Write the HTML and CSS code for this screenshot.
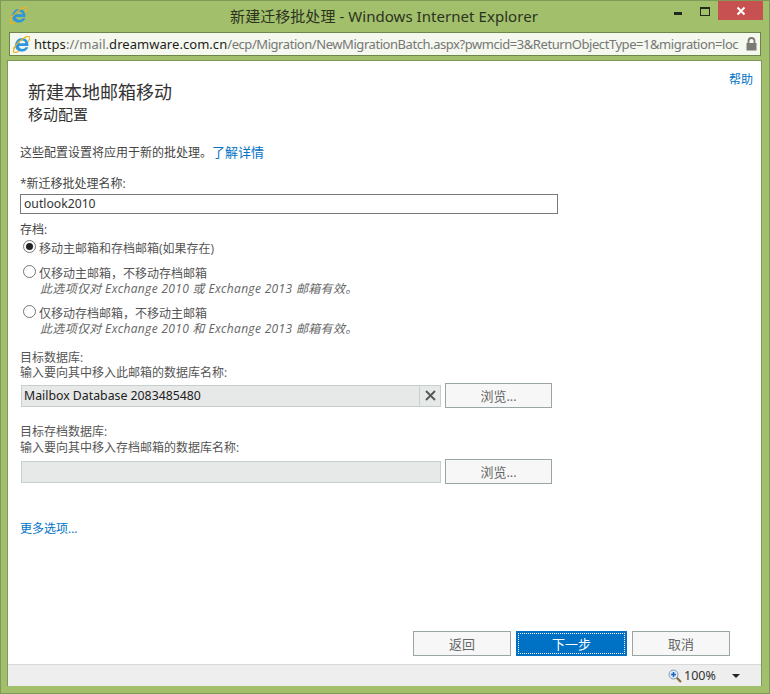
FILE: index.html
```html
<!DOCTYPE html>
<html lang="zh-CN">
<head>
<meta charset="utf-8">
<title>新建迁移批处理</title>
<link rel="stylesheet" href="styles.css">
</head>
<body>
<svg class="defs" width="0" height="0">
  <defs>
    <symbol id="ie" viewBox="1 1 18 18">
      <path d="M3.200 11.500C3 6.500 6.500 3 10.600 3c3.900 0 6.500 2.800 6.700 6.900v1.600H7.400c.2 2 1.600 3.200 3.600 3.200 1.500 0 2.600-.6 3.200-1.700h3c-1 2.900-3.300 4.400-6.300 4.400-4.400 0-7.500-2.300-7.700-5.900zM7.500 8.800h6.600c-.2-1.900-1.500-3-3.300-3-1.800 0-3 1.200-3.300 3z" fill="#2f96dc"/>
      <path d="M2 16.500C.4 14.500 5 8.500 9.500 5.200c4-3 8-4.400 9-3.200.8 1-.1 3.200-1.600 5" fill="none" stroke="#f2b21c" stroke-width="1.300"/>
      <path d="M2.500 12.500C1 15.500 1 18 2.500 18.500c1.200.4 3-.3 4.500-1.500" fill="none" stroke="#f2b21c" stroke-width="1.300"/>
    </symbol>
  </defs>
</svg>
<div class="window">
  <header class="titlebar">
    <svg class="ie-title"><use href="#ie"/></svg>
    <div class="title">新建迁移批处理 - Windows Internet Explorer</div>
    <div class="controls">
      <span class="min"></span>
      <span class="max"></span>
      <span class="close">
        <svg width="10" height="10" viewBox="0 0 10 10"><path d="M1.500 1.500l7 7M8.500 1.500l-7 7" stroke="#fff" stroke-width="2"/></svg>
      </span>
    </div>
  </header>
  <div class="addressbar">
    <svg class="ie-addr"><use href="#ie"/></svg>
    <div class="url"><span class="host">https</span>://mail.<span class="host">dreamware.com.cn</span><span class="path">/ecp/Migration/NewMigrationBatch.aspx?pwmcid=3&amp;ReturnObjectType=1&amp;migration=loc</span></div>
    <svg class="lock" width="11" height="14" viewBox="0 0 11 14"><path d="M2.500 6V4a3 3 0 0 1 6 0v2" fill="none" stroke="#7b7b76" stroke-width="1.800"/><rect x="0.500" y="6" width="10" height="7.500" fill="#7b7b76"/></svg>
  </div>
  <main class="page">
    <div class="content">
      <div class="help-row"><a class="help">帮助</a></div>
      <h1>新建本地邮箱移动</h1>
      <h2>移动配置</h2>
      <p class="intro">这些配置设置将应用于新的批处理。<a class="more">了解详情</a></p>
      <label class="field-label">*新迁移批处理名称:</label>
      <div class="textbox">outlook2010</div>
      <div class="archive-label">存档:</div>
      <div class="option first">
        <span class="radio checked"></span>
        <div class="option-text">移动主邮箱和存档邮箱(如果存在)</div>
      </div>
      <div class="option second">
        <span class="radio"></span>
        <div class="option-text">仅移动主邮箱，不移动存档邮箱<em>此选项仅对 Exchange 2010 或 Exchange 2013 邮箱有效。</em></div>
      </div>
      <div class="option third">
        <span class="radio"></span>
        <div class="option-text">仅移动存档邮箱，不移动主邮箱<em>此选项仅对 Exchange 2010 和 Exchange 2013 邮箱有效。</em></div>
      </div>
      <div class="db-label db-one">目标数据库:<br>输入要向其中移入此邮箱的数据库名称:</div>
      <div class="picker">
        <div class="picker-box">
          <span class="picker-value">Mailbox Database 2083485480</span>
          <span class="picker-clear"><svg width="11" height="11" viewBox="0 0 11 11"><path d="M1 1l9 9M10 1l-9 9" stroke="#555" stroke-width="1.800"/></svg></span>
        </div>
        <button class="btn browse">浏览...</button>
      </div>
      <div class="db-label db-two">目标存档数据库:<br>输入要向其中移入存档邮箱的数据库名称:</div>
      <div class="picker">
        <div class="picker-box"></div>
        <button class="btn browse">浏览...</button>
      </div>
      <a class="more-options">更多选项...</a>
    </div>
    <div class="actions">
      <button class="btn action">返回</button>
      <button class="btn action primary"><span>下一步</span></button>
      <button class="btn action">取消</button>
    </div>
    <footer class="status">
      <svg class="zoom-icon" width="14" height="14" viewBox="0 0 14 14"><path d="M8.500 8.500l4.500 4.500" stroke="#8a6a3a" stroke-width="2.200"/><circle cx="5.500" cy="5.500" r="4.500" fill="#dcebf7" stroke="#7f9db8"/><path d="M3 5.500h5M5.500 3v5" stroke="#1f63b5" stroke-width="1.600"/></svg>
      <span class="zoom-value">100%</span>
      <span class="zoom-arrow"></span>
    </footer>
  </main>
</div>
</body>
</html>
```
FILE: styles.css
```css
* { box-sizing: border-box; }
html, body { margin: 0; padding: 0; }
body { width: 770px; height: 694px; overflow: hidden; font-family: "Open Sans", "Noto Sans CJK SC", sans-serif; }
.defs { display: block; height: 0; }
.window {
  width: 770px; height: 694px;
  background: #a2bf6b;
  border: 1px solid #7f9a58;
  display: flex; flex-direction: column;
}
.titlebar { height: 30px; display: flex; align-items: flex-start; flex: none; }
.ie-title { width: 17px; height: 17px; margin: 6px 0 0 9px; flex: none; }
.title {
  flex: 1; text-align: center; font-size: 15px; line-height: 20px;
  margin-top: 5px; margin-left: 67px; color: #2b3320; white-space: nowrap;
  font-family: "Noto Sans", "Noto Sans CJK SC", sans-serif; letter-spacing: .05px;
}
.controls { display: flex; flex: none; align-items: flex-start; margin-right: 6px; }
.min { width: 8px; height: 3px; background: #22281a; margin-top: 11px; }
.max { width: 10px; height: 9px; border: 1px solid #22281a; border-top-width: 2px; margin: 6px 0 0 18px; }
.close {
  width: 45px; height: 19px; background: #c75050; margin-left: 8px;
  display: flex; align-items: center; justify-content: center;
}
.addressbar {
  flex: none; height: 24px; margin: 1px 8px 0 8px;
  background: #f5f8ee; border: 1px solid #6c8548;
  display: flex; align-items: center; padding-left: 3px;
}
.ie-addr { width: 17px; height: 17px; flex: none; }
.url {
  flex: 1; margin-left: 4px; font-size: 13px; color: #777; white-space: nowrap; overflow: hidden;
  font-family: "Noto Sans", sans-serif; letter-spacing: .05px;
}
.host { color: #1e1e1e; }
.path { letter-spacing: -.44px; }
.lock { flex: none; margin: 0 3px 0 7px; }
.page {
  flex: none; height: 626px; margin: 4px 7px 0 6px;
  background: #fff; border: 1px solid #7f9a58; border-bottom: 0;
  display: flex; flex-direction: column; color: #444; font-size: 12px;
}
.content { flex: 1; padding: 0 0 0 12px; line-height: 14px; }
.help-row { display: flex; justify-content: flex-end; padding: 12px 8px 0 0; height: 19px; }
a { color: #0072c6; }
.help { font-size: 12px; }
h1 { margin: 0 0 0 8px; font-weight: 400; font-size: 18px; line-height: 24px; color: #333; }
h2 { margin: 0 0 0 8px; font-weight: 400; font-size: 15px; line-height: 21px; color: #333; }
.intro { margin: 17px 0 0; line-height: 20px; }
.more { font-size: 13px; }
.field-label { display: block; margin-top: 13px; line-height: 16px; }
.textbox {
  width: 538px; height: 20px; margin-top: 2px; border: 1px solid #777;
  font-size: 12.200px; line-height: 18px; padding-left: 3px; color: #333; font-family: "Noto Sans", sans-serif;
}
.archive-label { margin-top: 9px; line-height: 14px; }
.option { display: flex; padding-left: 3px; }
.option.first { margin-top: 4px; }
.option.second { margin-top: 10px; }
.option.third { margin-top: 10px; }
.radio {
  flex: none; width: 13px; height: 13px; border: 1px solid #777; border-radius: 50%; margin: -1px 3px 0 0; background: #fff;
  display: flex; align-items: center; justify-content: center;
}
.radio.checked::after { content: ""; width: 7px; height: 7px; border-radius: 50%; background: #222; }
.option-text { line-height: 15px; color: #555; }
.option-text em { display: block; color: #666; font-style: italic; margin: 1px 0 0 1px; line-height: 14px; letter-spacing: .33px; }
.db-label { line-height: 15px; color: #555; }
.db-one { margin-top: 14px; }
.db-two { margin-top: 16px; line-height: 16px; }
.picker { display: flex; align-items: center; padding-left: 1px; margin-top: 3px; height: 25px; }
.picker-box {
  width: 420px; height: 22px; background: #e7e8e8; border: 1px solid #c5cfcf;
  display: flex; justify-content: space-between; align-items: stretch;
}
.picker-value { font-size: 12.300px; line-height: 20px; padding-left: 2px; color: #222; font-family: "Noto Sans", sans-serif; }
.picker-clear { width: 21px; border-left: 1px solid #c5cfcf; display: flex; align-items: center; justify-content: center; }
.btn {
  font-family: inherit; font-size: 13px; color: #666; background: #f7f7f7; border: 1px solid #9aa5a5; padding: 0;
  display: flex; align-items: center; justify-content: center;
}
.browse { width: 107px; height: 25px; margin-left: 4px; }
.more-options { display: block; margin-top: 38px; line-height: 14px; }
.actions { flex: none; display: flex; justify-content: flex-end; gap: 5px; padding-right: 31px; height: 33px; }
.action { width: 98px; height: 25px; }
.primary { width: 111px; background: #0072c6; border: 1px solid #0072c6; color: #fff; padding: 1px; }
.primary span { flex: 1; align-self: stretch; border: 1px dotted #fff; display: flex; align-items: center; justify-content: center; }
.status {
  flex: none; height: 22px; background: #eeeeee; border-top: 1px solid #d8d8d8;
  display: flex; align-items: center; padding-left: 660px; color: #333;
}
.zoom-icon { flex: none; }
.zoom-value { margin-left: 2px; font-size: 12.500px; font-family: "Noto Sans", sans-serif; }
.zoom-arrow {
  margin-left: 16px; width: 0; height: 0; border-left: 4px solid transparent; border-right: 4px solid transparent; border-top: 4px solid #222;
}
```
